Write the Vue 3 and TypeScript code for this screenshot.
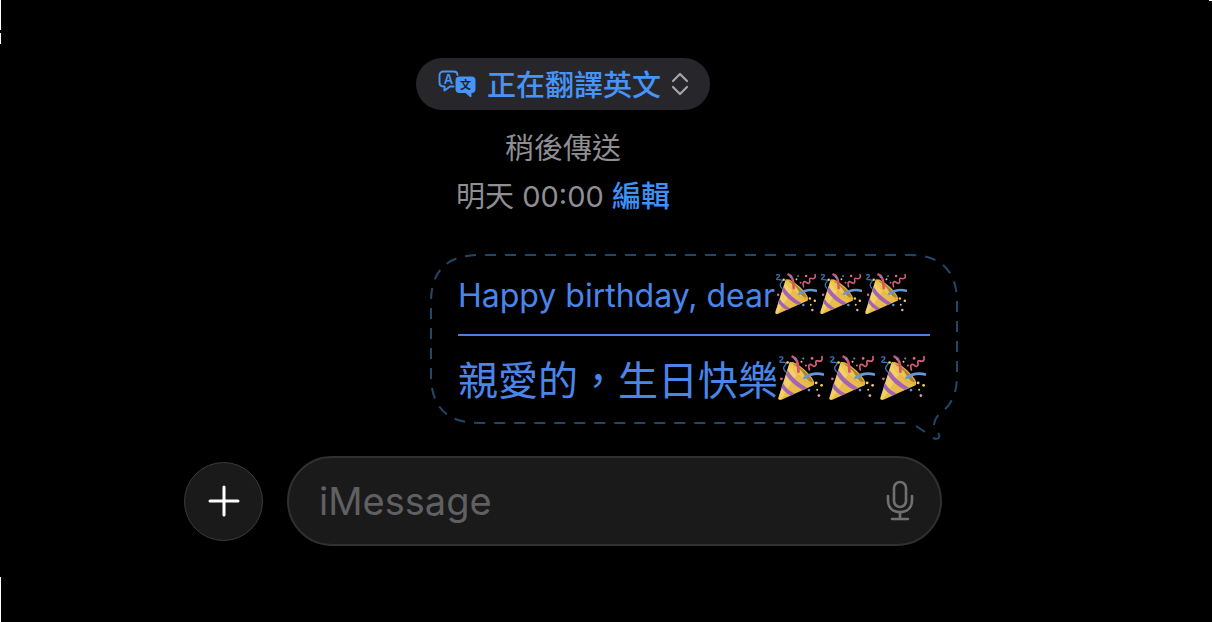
<script setup lang="ts">
import { ref } from 'vue'

interface Line {
  text: string
  lang: string
  kind: 'source' | 'translated'
  poppers: number
}

const lines: Line[] = [
  { text: 'Happy birthday, dear', lang: 'en', kind: 'source', poppers: 3 },
  { text: '親愛的，生日快樂', lang: 'zh-Hant', kind: 'translated', poppers: 3 },
]

const draft = ref('')
</script>

<template>
  <main class="screen" lang="zh-Hant">
    <svg class="defs" aria-hidden="true">
      <symbol id="popper" viewBox="0 0 135 135">
        <path d="M35 20C54 30 95 66 106 88L10 131Q-1 134 2 123Z" fill="#e9bd4b" />
        <path d="M35 20C42 24 54 34 64 44L8 131Q-1 134 2 123Z" fill="#f8dc78" opacity=".6" />
        <path d="M28 45Q50 78 86 97L73 103Q38 84 23 58Z" fill="#a463b4" />
        <path d="M14 82Q29 105 49 113L37 119Q20 111 10 95Z" fill="#a463b4" />
        <ellipse cx="71" cy="54" rx="47" ry="13" transform="rotate(43 71 54)" fill="#e0b040" />
        <ellipse cx="73" cy="53" rx="38" ry="7" transform="rotate(43 73 53)" fill="#ad8230" />
        <path d="M39 24Q57 34 70 48L92 82Q60 63 34 33Z" fill="#edc552" />
        <path d="M43 5Q60 10 60 49" fill="none" stroke="#d9506a" stroke-width="8" stroke-linecap="round" />
        <path d="M78 67Q102 50 132 57" fill="none" stroke="#6596d6" stroke-width="8" stroke-linecap="round" />
        <path d="M92 44Q86 26 98 28Q110 39 112 27Q108 13 119 18Q132 20 129 5" fill="none" stroke="#d65f7d" stroke-width="5" stroke-linecap="round" />
        <path d="M5 6Q20 3 11 14Q-2 23 13 21Q30 22 20 31Q12 39 22 49" fill="none" stroke="#3f72b9" stroke-width="4" stroke-linecap="round" />
        <g fill="#f4cf62">
          <circle cx="28" cy="22" r="4" /><circle cx="69" cy="20" r="3" />
          <circle cx="112" cy="82" r="4" /><circle cx="128" cy="89" r="4" /><circle cx="115" cy="102" r="3" />
        </g>
        <g fill="#e8668a">
          <circle cx="10" cy="70" r="4" /><circle cx="100" cy="10" r="4" /><circle cx="82" cy="31" r="3" />
        </g>
        <g fill="#5c94dc">
          <circle cx="51" cy="12" r="4" /><circle cx="74" cy="10" r="3" /><circle cx="91" cy="103" r="4" />
        </g>
        <circle cx="120" cy="119" r="4" fill="#e6a0c8" />
      </symbol>
    </svg>

    <div class="thread">
      <button class="pill" type="button">
        <svg class="translate" viewBox="0 0 38 28" aria-hidden="true">
          <path d="M15.500 16.500H12L6.500 20.500V16.500H5.500C2.500 16.500 1.500 15 1.500 12.500V5.500C1.500 3 3 1.500 5.500 1.500H15.500C18 1.500 19.500 3 19.500 5" fill="none" stroke="#4794f8" stroke-width="1.900" stroke-linejoin="round" stroke-linecap="round" />
          <text x="10.500" y="13.500" class="glyph-a">A</text>
          <path d="M21.500 6.500H33.500Q37.500 6.500 37.500 10.500V19Q37.500 23 33.500 23V26.500Q33 28 31.500 26.500L27.500 23H21.500Q17.500 23 17.500 19V10.500Q17.500 6.500 21.500 6.500Z" fill="#4794f8" />
          <text x="27.500" y="19" class="glyph-wen">文</text>
        </svg>
        <span class="pill-text">正在翻譯英文</span>
        <svg class="chevrons" viewBox="0 0 18 24" aria-hidden="true">
          <path d="M2 9L9 2L16 9M2 15L9 22L16 15" />
        </svg>
      </button>

      <div class="schedule">
        <p>稍後傳送</p>
        <p>明天 <time>00:00</time> <a href="#edit">編輯</a></p>
      </div>

      <article class="bubble">
        <svg class="outline" viewBox="0 0 528 188" preserveAspectRatio="none" aria-hidden="true">
          <path class="dashes" d="M504 171C505 161 512 159 518 152C525 142 527 134 527 121V48C527 17 511 1 480 1H49C17 1 1 17 1 48V121C1 153 17 169 49 169H480" />
          <path d="M486 172L495 178M503 184Q508 186 509 183Q510 181 508 179" />
        </svg>
        <p v-for="line in lines" :key="line.lang" :class="['line', line.kind]" :lang="line.lang">
          <span>{{ line.text }}</span>
          <svg v-for="n in line.poppers" :key="n" class="popper" role="img" aria-label="🎉">
            <use href="#popper" />
          </svg>
        </p>
      </article>

      <form class="composer" @submit.prevent>
        <button class="add" type="button" aria-label="加入">
          <svg viewBox="0 0 32 32" aria-hidden="true"><path d="M16 2V30M2 16H30" /></svg>
        </button>
        <div class="field">
          <input v-model="draft" type="text" placeholder="iMessage" aria-label="iMessage" />
          <button class="mic" type="button" aria-label="聽寫">
            <svg viewBox="0 0 28 42" aria-hidden="true">
              <rect x="8" y="2" width="12" height="25" rx="6" />
              <path d="M2 16V20C2 28 7 32 14 32S26 28 26 20V16M14 32V39M6 39H22" />
            </svg>
          </button>
        </div>
      </form>
    </div>
  </main>
</template>

<style>
html,
body {
  background: #000;
}
</style>

<style scoped>
.screen {
  box-sizing: border-box;
  min-height: 100vh;
  padding: 58px 86px 0 0;
  background:
    linear-gradient(#fff, #fff) left top / 1px 30px no-repeat,
    linear-gradient(#fff, #fff) left 33px / 1px 11px no-repeat,
    linear-gradient(#fff, #fff) left bottom / 1px 45px no-repeat,
    linear-gradient(#fff, #fff) right top / 3px 1px no-repeat,
    #000;
  font-family: Inter, "Noto Sans CJK TC", sans-serif;
}
.defs {
  position: absolute;
  width: 0;
  height: 0;
}
.thread {
  display: flex;
  flex-direction: column;
  align-items: center;
  max-width: 758px;
  margin: 0 auto;
}
button {
  border: 0;
  padding: 0;
  font: inherit;
  color: inherit;
  background: none;
}
p {
  margin: 0;
}
.pill {
  display: flex;
  align-items: center;
  height: 52px;
  padding: 0 21px 0 22px;
  border-radius: 26px;
  background: #27272b;
  color: #4794f8;
  font-size: 29px;
  font-weight: 500;
  line-height: 48px;
}
.pill-text {
  padding-top: 3px;
}
.translate {
  width: 38px;
  height: 28px;
  margin-right: 11px;
}
.glyph-a {
  font: 600 13px Inter, sans-serif;
  text-anchor: middle;
  fill: #4794f8;
}
.glyph-wen {
  font: 700 11px "Noto Sans CJK TC", sans-serif;
  text-anchor: middle;
  fill: #202126;
}
.chevrons {
  width: 18px;
  height: 24px;
  margin-left: 10px;
  fill: none;
  stroke: #a5a5aa;
  stroke-width: 2.2;
  stroke-linecap: round;
  stroke-linejoin: round;
}
.schedule {
  margin-top: 15px;
  color: #8e8e93;
  font-size: 29px;
  line-height: 48px;
  text-align: center;
}
.schedule a {
  color: #3e91f7;
  font-weight: 500;
  text-decoration: none;
}
.bubble {
  position: relative;
  box-sizing: border-box;
  align-self: flex-end;
  width: 528px;
  margin: 33px -16px 0 0;
  padding: 0 28px 4px;
  color: #4a86ea;
}
.outline {
  position: absolute;
  left: 0;
  top: 0;
  width: 100%;
  height: 188px;
  fill: none;
  stroke: #21486b;
  stroke-width: 2;
}
.dashes {
  stroke-dasharray: 11 9;
}
.line {
  display: flex;
  align-items: center;
  white-space: nowrap;
}
.source {
  height: 80px;
  border-bottom: 2px solid #4a80dc;
  font-size: 32px;
}
.source span {
  padding-top: 2px;
}
.translated {
  height: 84px;
  font-size: 40px;
}
.popper {
  flex: none;
  width: 42px;
  height: 42px;
  margin-right: 3px;
}
.translated .popper {
  width: 46px;
  height: 46px;
  margin-right: 5px;
}
.composer {
  display: flex;
  align-items: center;
  gap: 24px;
  width: 100%;
  margin-top: 32px;
}
.add {
  display: grid;
  place-items: center;
  flex: none;
  box-sizing: border-box;
  width: 79px;
  height: 79px;
  border: 1px solid #3c3c3d;
  border-radius: 50%;
  background: #1a1a1b;
}
.add svg {
  width: 32px;
  height: 32px;
  fill: none;
  stroke: #fff;
  stroke-width: 3;
  stroke-linecap: round;
}
.field {
  display: flex;
  align-items: center;
  flex: 1;
  box-sizing: border-box;
  min-width: 0;
  height: 90px;
  padding: 0 26px 0 30px;
  border: 2px solid #303031;
  border-radius: 45px;
  background: #1a1a1a;
}
.field input {
  flex: 1;
  min-width: 0;
  padding: 0;
  border: 0;
  outline: 0;
  background: none;
  color: #fff;
  font: 400 38px Inter, sans-serif;
}
.field input::placeholder {
  color: #606062;
  opacity: 1;
}
.mic,
.mic svg {
  display: block;
  flex: none;
  width: 28px;
  height: 42px;
}
.mic svg {
  fill: none;
  stroke: #707072;
  stroke-width: 2.6;
  stroke-linecap: round;
  stroke-linejoin: round;
}
</style>
